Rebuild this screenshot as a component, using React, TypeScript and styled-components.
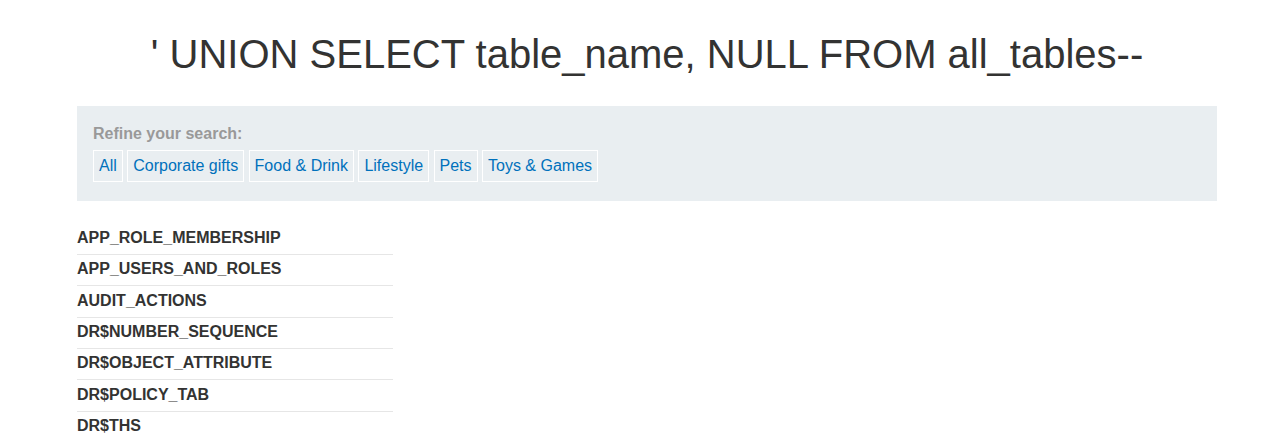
import React from "react";
import styled, { createGlobalStyle } from "styled-components";

const Global = createGlobalStyle`
  html, body {
    margin: 0;
    padding: 0;
    background: #ffffff;
  }
  body {
    font-family: "Liberation Sans", Arial, sans-serif;
    color: #333332;
  }
`;

const Page = styled.main`
  width: 1140px;
  margin-left: 77px;
  padding-top: 30px;
`;

const Title = styled.h1`
  margin: 0 0 28px;
  font-size: 40px;
  line-height: 48px;
  font-weight: normal;
  text-align: center;
  color: #333332;
`;

const Filters = styled.section`
  background: #e9eef1;
  padding: 18px 16px 18.5px;
  display: flex;
  flex-direction: column;
  gap: 6px;
`;

const FilterLabel = styled.div`
  font-size: 16px;
  line-height: 20px;
  font-weight: bold;
  color: #999999;
`;

const FilterList = styled.div`
  display: flex;
  gap: 4.45px;
`;

const FilterLink = styled.a`
  display: block;
  border: 1px solid #ffffff;
  padding: 0 5px;
  line-height: 30px;
  font-size: 16px;
  color: #0071bc;
  text-decoration: none;
`;

const Table = styled.div`
  width: 316px;
  margin-top: 23.1px;
  display: flex;
  flex-direction: column;
`;

const Row = styled.div<{ $last?: boolean }>`
  padding: 4.2px 0 6.2px;
  line-height: 20px;
  font-size: 16px;
  font-weight: bold;
  color: #333332;
  border-bottom: 1px solid ${(p) => (p.$last ? "transparent" : "#e6e6e6")};
`;

const categories = ["All", "Corporate gifts", "Food & Drink", "Lifestyle", "Pets", "Toys & Games"];

const tables = [
  "APP_ROLE_MEMBERSHIP",
  "APP_USERS_AND_ROLES",
  "AUDIT_ACTIONS",
  "DR$NUMBER_SEQUENCE",
  "DR$OBJECT_ATTRIBUTE",
  "DR$POLICY_TAB",
  "DR$THS",
];

export default function App() {
  return (
    <>
      <Global />
      <Page>
        <Title>' UNION SELECT table_name, NULL FROM all_tables--</Title>
        <Filters>
          <FilterLabel>Refine your search:</FilterLabel>
          <FilterList>
            {categories.map((c) => (
              <FilterLink key={c} href="#">
                {c}
              </FilterLink>
            ))}
          </FilterList>
        </Filters>
        <Table>
          {tables.map((t, i) => (
            <Row key={t} $last={i === tables.length - 1}>
              {t}
            </Row>
          ))}
        </Table>
      </Page>
    </>
  );
}
